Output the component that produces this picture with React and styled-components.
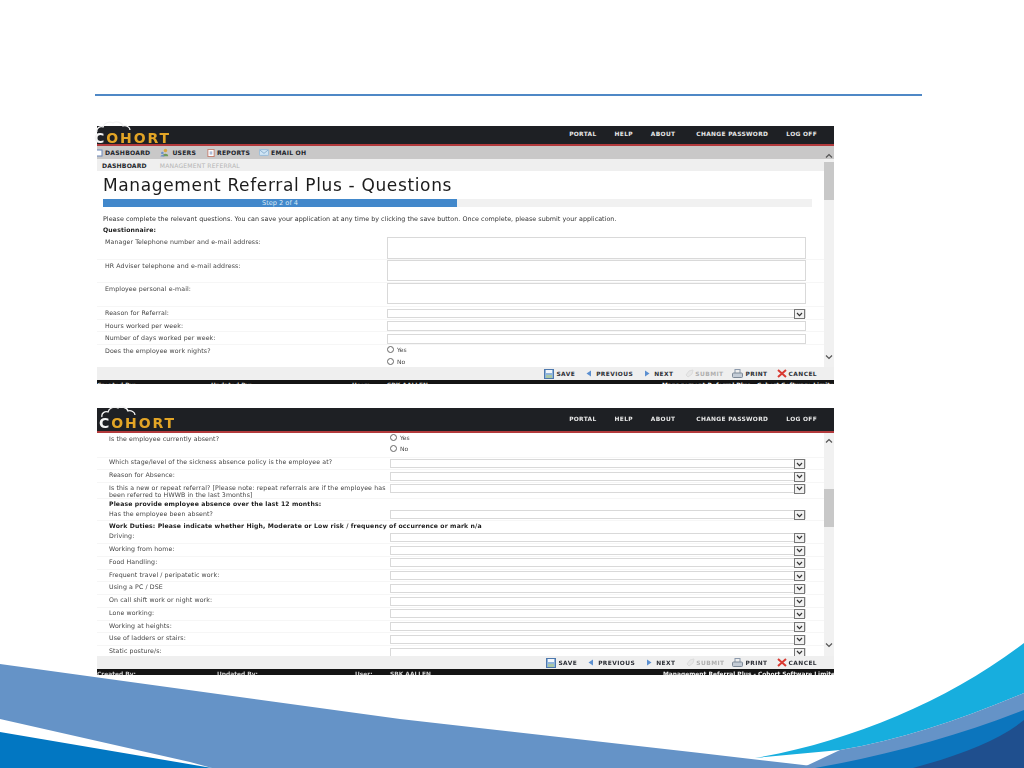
import React from "react";
import styled, { createGlobalStyle } from "styled-components";

const Global = createGlobalStyle`
  html, body { margin: 0; padding: 0; background: #fff; }
  body { font-family: "DejaVu Sans", "Liberation Sans", sans-serif; }
`;

const Slide = styled.div`
  position: relative;
  width: 1024px;
  height: 768px;
  overflow: hidden;
  background: #fff;
  padding-top: 94px;
  box-sizing: border-box;
`;
const Rule = styled.div`
  height: 2px;
  width: 827px;
  margin-left: 95px;
  background: #4f88c6;
`;
const Panel = styled.section`
  width: 737px;
  margin: ${p => p.$top}px 0 0 97px;
  filter: blur(0.35px);
  background: #fff;
  position: relative;
`;
const Header = styled.header`
  height: ${p => p.$h}px;
  box-sizing: border-box;
  background: #1e2024;
  border-bottom: 2px solid #b23a3c;
  display: flex;
  align-items: center;
  justify-content: space-between;
  padding-right: 17px;
`;
const Logo = styled.div`
  position: relative;
  display: flex;
  align-items: baseline;
  margin-left: ${p => p.$left}px;
  padding-top: ${p => p.$pad}px;
  font: bold 14px "DejaVu Sans", sans-serif;
  letter-spacing: 1.9px;
  line-height: 14px;
`;
const LogoC = styled.span`
  color: #f4f4f4;
  letter-spacing: 2px;
`;
const LogoRest = styled.span`
  color: #e3a526;
`;
const Cloud = styled.svg`
  position: absolute;
  left: 2px;
  top: ${p => p.$top}px;
`;
const TopLinks = styled.nav`
  display: flex;
  align-items: center;
  padding-bottom: 2px;
`;
const TopLink = styled.a`
  font: bold 5.9px "DejaVu Sans", sans-serif;
  letter-spacing: 0.32px;
  color: #e8e8e8;
  margin-left: ${p => p.$gap}px;
`;
const NavBar = styled.div`
  height: 13px;
  background: #c9c8c8;
  display: flex;
  align-items: center;
`;
const NavItem = styled.span`
  display: flex;
  align-items: center;
  font: bold 6.1px "DejaVu Sans", sans-serif;
  letter-spacing: 0.22px;
  color: #22252c;
  gap: 2px;
  margin-right: ${p => p.$gap}px;
`;
const Body = styled.div`
  display: flex;
  height: ${p => p.$h}px;
`;
const Content = styled.div`
  flex: 1;
  min-width: 0;
  overflow: hidden;
`;
const Crumbs = styled.div`
  height: 12px;
  background: #efefef;
  display: flex;
  align-items: center;
  padding-left: 5px;
  gap: 13px;
  font: bold 6.1px "DejaVu Sans", sans-serif;
  letter-spacing: 0.15px;
  color: #25272c;
`;
const CrumbMuted = styled.span`
  font-weight: normal;
  color: #b5b5b5;
`;
const Title = styled.h1`
  margin: 0;
  height: 28px;
  font: normal 17px/28px "DejaVu Sans", sans-serif;
  letter-spacing: 0.64px;
  color: #1c1c1c;
  padding-left: 6px;
  filter: grayscale(1);
`;
const Progress = styled.div`
  margin-left: 6px;
  width: 709px;
  height: 8px;
  background: #f1f1f1;
`;
const ProgressFill = styled.div`
  width: 354px;
  height: 100%;
  background: #4288cb;
  color: #dbe8f5;
  font: 6.6px/8px "DejaVu Sans", sans-serif;
  text-align: center;
`;
const Intro = styled.p`
  margin: 8px 0 0 6px;
  font: 6.4px/8px "DejaVu Sans", sans-serif;
  letter-spacing: 0.02px;
  color: #333;
  white-space: nowrap;
  filter: grayscale(1);
`;
const Section = styled.div`
  margin: ${p => p.$top || 0}px 0 0 ${p => p.$left}px;
  font: bold 6.13px/${p => p.$h || 8}px "DejaVu Sans", sans-serif;
  letter-spacing: 0.14px;
  color: #1a1a1a;
  height: ${p => p.$h || 8}px;
  white-space: nowrap;
  filter: grayscale(1);
`;
const Row = styled.div`
  display: grid;
  grid-template-columns: ${p => p.$label}px ${p => p.$field}px;
  height: ${p => p.$h}px;
  padding-left: ${p => p.$left}px;
  box-sizing: border-box;
  border-bottom: 1px solid #f6f6f6;
  align-items: start;
`;
const Label = styled.div`
  font: 6.25px/7.2px "DejaVu Sans", sans-serif;
  letter-spacing: 0.1px;
  color: #444;
  padding-top: ${p => p.$pad}px;
  filter: grayscale(1);
`;
const FieldBox = styled.div`
  position: relative;
  box-sizing: border-box;
  height: ${p => p.$h}px;
  margin-top: ${p => p.$top}px;
  border: 1px solid #d9d9d9;
  background: #fff;
`;
const SelectArrow = styled.span`
  position: absolute;
  right: 0;
  top: -1px;
  width: 11px;
  height: 10px;
  box-sizing: border-box;
  border: 1px solid #777;
  background: #f1f1f1;
  display: flex;
  align-items: center;
  justify-content: center;
`;
const RadioStack = styled.div`
  display: flex;
  flex-direction: column;
  gap: 3px;
  padding-top: ${p => p.$top}px;
`;
const RadioLine = styled.label`
  display: flex;
  align-items: center;
  gap: 3px;
  height: 8.5px;
  font: 6px "DejaVu Sans", sans-serif;
  color: #444;
  filter: grayscale(1);
`;
const RadioDot = styled.span`
  width: 7px;
  height: 7px;
  border: 1px solid #666;
  border-radius: 50%;
  background: #fff;
  box-sizing: border-box;
`;
const Scrollbar = styled.div`
  width: 10px;
  flex: none;
  position: relative;
  background: #f1f1f1;
`;
const Thumb = styled.div`
  position: absolute;
  left: 0;
  right: 0;
  top: ${p => p.$top}px;
  height: ${p => p.$h}px;
  background: #c8c8c8;
`;
const ScrollArrow = styled.svg`
  position: absolute;
  left: 1px;
  top: ${p => p.$top}px;
`;
const Toolbar = styled.div`
  height: 13px;
  background: #efefef;
  display: flex;
  align-items: center;
  justify-content: flex-end;
  padding-right: 17px;
`;
const Action = styled.span`
  display: flex;
  align-items: center;
  gap: ${p => p.$inner}px;
  margin-left: ${p => p.$gap}px;
  font: bold 5.9px "DejaVu Sans", sans-serif;
  letter-spacing: 0.42px;
  color: ${p => (p.$off ? "#aeaeae" : "#2b2e35")};
`;
const Footer = styled.footer`
  height: ${p => p.$h}px;
  background: #141414;
  overflow: hidden;
  display: grid;
  grid-template-columns: ${p => p.$cols};
  padding-top: ${p => p.$pad}px;
  box-sizing: border-box;
  font: bold 5.9px/7px "DejaVu Sans", sans-serif;
  color: #d5d5d5;
  white-space: nowrap;
`;
const FooterRight = styled.span`
  text-align: right;
  color: #f2f2f2;
`;
const Decoration = styled.svg`
  position: absolute;
  left: 0;
  top: 0;
  pointer-events: none;
`;

const ScrollChevron = ({ up, top }) => (
  <ScrollArrow width="8" height="6" viewBox="0 0 8 6" $top={top}>
    <path d={up ? "M1 4.5 4 1.5 7 4.5" : "M1 1.5 4 4.5 7 1.5"} fill="none" stroke="#555" strokeWidth="1.2" />
  </ScrollArrow>
);

const SmallChevron = () => (
  <svg width="7" height="5" viewBox="0 0 7 5">
    <path d="M1 1 3.5 3.6 6 1" fill="none" stroke="#333" strokeWidth="1.2" />
  </svg>
);

const CloudLogo = ({ top }) => (
  <Cloud $top={top} width="36" height="12" viewBox="0 0 36 12">
    <path d="M1 11C0 7 4 5 7 6 8 2 13 0 17 2 20 0 26 1 27 5 30 4 34 6 34 9" fill="none" stroke="#f3f3f3" strokeWidth="1.3" />
  </Cloud>
);

const IconBoard = () => (
  <svg width="6" height="8" viewBox="0 0 6 8"><rect x="-1" y="1" width="6" height="6" fill="#fff" stroke="#6b86b8" /></svg>
);
const IconUsers = () => (
  <svg width="10" height="9" viewBox="0 0 11 9">
    <circle cx="6" cy="2.4" r="1.9" fill="#d9a53d" />
    <path d="M3 8.5C3 5 9 5 9 8.5Z" fill="#6f9a5a" />
    <circle cx="2.6" cy="5" r="1.4" fill="#6c91c8" />
    <path d="M0.5 9C0.5 6.6 5 6.6 5 9Z" fill="#6c91c8" />
  </svg>
);
const IconReport = () => (
  <svg width="8" height="10" viewBox="0 0 9 10">
    <rect x="1" y="1" width="7" height="8" fill="#fff" stroke="#c07a6a" />
    <path d="M3 4H6M3 6H6" stroke="#6b86b8" />
  </svg>
);
const IconMail = () => (
  <svg width="10" height="7" viewBox="0 0 12 8">
    <rect x="0.5" y="0.5" width="11" height="7" rx="1" fill="#cfe4f4" stroke="#8fb7d8" />
    <path d="M1 1 6 5 11 1" fill="none" stroke="#7ea6c9" />
  </svg>
);
const IconSave = () => (
  <svg width="10" height="10" viewBox="0 0 10 10">
    <rect x="0.5" y="0.5" width="9" height="9" fill="#8fb4dc" stroke="#4d78ad" />
    <rect x="2" y="1" width="6" height="3" fill="#f2f6fb" />
    <rect x="2" y="6" width="6" height="3" fill="#a9c7a6" />
  </svg>
);
const IconPrev = () => (
  <svg width="6" height="7" viewBox="0 0 6 7"><path d="M5 0.5V6.5L0.5 3.5Z" fill="#5b8fd0" /></svg>
);
const IconNext = () => (
  <svg width="6" height="7" viewBox="0 0 6 7"><path d="M1 0.5V6.5L5.5 3.5Z" fill="#5b8fd0" /></svg>
);
const IconSubmit = () => (
  <svg width="9" height="9" viewBox="0 0 9 9"><path d="M1 6 4 2 8 1 7 5 3 8Z" fill="#e8e8e8" stroke="#dcdcdc" /></svg>
);
const IconPrint = () => (
  <svg width="11" height="10" viewBox="0 0 11 10">
    <rect x="3" y="0.5" width="5" height="4" fill="#eee" stroke="#8a98aa" />
    <rect x="0.5" y="4" width="10" height="4.5" rx="1" fill="#c4ccd6" stroke="#7d8997" />
  </svg>
);
const IconCancel = () => (
  <svg width="10" height="9" viewBox="0 0 10 9"><path d="M1 1 9 8M9 1 1 8" stroke="#d93a32" strokeWidth="2" /></svg>
);

const topLinks = [
  ["PORTAL", 0], ["HELP", 18], ["ABOUT", 18], ["CHANGE PASSWORD", 21], ["LOG OFF", 18],
];

const HeaderBar = ({ h, left, pad, cloudTop }) => (
  <Header $h={h}>
    <Logo $left={left} $pad={pad}>
      <CloudLogo top={cloudTop} />
      <LogoC>C</LogoC>
      <LogoRest>OHORT</LogoRest>
    </Logo>
    <TopLinks>
      {topLinks.map(([t, g]) => <TopLink key={t} $gap={g}>{t}</TopLink>)}
    </TopLinks>
  </Header>
);

const ActionBar = ({ gaps }) => (
  <Toolbar>
    <Action $gap={0} $inner={2}><IconSave />SAVE</Action>
    <Action $gap={gaps[0]} $inner={4}><IconPrev />PREVIOUS</Action>
    <Action $gap={gaps[1]} $inner={4}><IconNext />NEXT</Action>
    <Action $gap={gaps[2]} $inner={1} $off><IconSubmit />SUBMIT</Action>
    <Action $gap={gaps[3]} $inner={2}><IconPrint />PRINT</Action>
    <Action $gap={gaps[4]} $inner={2}><IconCancel />CANCEL</Action>
  </Toolbar>
);

const Question = ({ g, label, h, field, boxH, boxTop, pad = 2, arrow }) => (
  <Row $left={g.left} $label={g.label} $field={g.field} $h={h}>
    <Label $pad={pad}>{label}</Label>
    {field || (
      <FieldBox $h={boxH} $top={boxTop}>
        {arrow && <SelectArrow><SmallChevron /></SelectArrow>}
      </FieldBox>
    )}
  </Row>
);

const Radios = ({ top }) => (
  <RadioStack $top={top}>
    <RadioLine><RadioDot />Yes</RadioLine>
    <RadioLine><RadioDot />No</RadioLine>
  </RadioStack>
);

const g1 = { left: 8, label: 282, field: 419 };
const g2 = { left: 12, label: 281, field: 416 };

const duties = [
  "Driving:", "Working from home:", "Food Handling:", "Frequent travel / peripatetic work:",
  "Using a PC / DSE", "On call shift work or night work:", "Lone working:",
  "Working at heights:", "Use of ladders or stairs:", "Static posture/s:",
];

export default function App() {
  return (
    <Slide>
      <Global />
      <Decoration width="1024" height="768" viewBox="0 0 1024 768">
        <path d="M0 664 L400 719 L700 753 L812 766 L820 768 L212 768 L190 762 L0 719Z" fill="#6593c7" />
        <path d="M0 732 L212 768 L0 768Z" fill="#0277c2" />
        <path d="M755 758 C850 742 950 700 1024 643 L1024 693 C960 720 900 740 840 750Z" fill="#17aede" />
        <path d="M806 766 L840 750 C900 740 960 720 1024 693 L1024 720 L1024 768 L812 768Z" fill="#6593c7" />
        <path d="M815 768 C890 755 960 735 1024 710 L1024 768Z" fill="#0c75bd" />
        <path d="M913 768 C960 755 1000 740 1024 720 L1024 768Z" fill="#1f4f8e" />
      </Decoration>
      <Rule />
      <Panel $top={30}>
        <HeaderBar h={20} left={-3} pad={5} cloudTop={-5} />
        <NavBar>
          <NavItem $gap={10}><IconBoard />DASHBOARD</NavItem>
          <NavItem $gap={11}><IconUsers />USERS</NavItem>
          <NavItem $gap={9}><IconReport />REPORTS</NavItem>
          <NavItem $gap={0}><IconMail />EMAIL OH</NavItem>
        </NavBar>
        <Body $h={208}>
          <Content>
            <Crumbs>DASHBOARD<CrumbMuted>MANAGEMENT REFERRAL</CrumbMuted></Crumbs>
            <Title>Management Referral Plus - Questions</Title>
            <Progress><ProgressFill>Step 2 of 4</ProgressFill></Progress>
            <Intro>Please complete the relevant questions. You can save your application at any time by clicking the save button. Once complete, please submit your application.</Intro>
            <Section $left={6} $top={3}>Questionnaire:</Section>
            <Question g={g1} label="Manager Telephone number and e-mail address:" h={26} boxH={22} boxTop={3} pad={4} />
            <Question g={g1} label="HR Adviser telephone and e-mail address:" h={23} boxH={21} boxTop={0} />
            <Question g={g1} label="Employee personal e-mail:" h={24} boxH={21} boxTop={0} />
            <Question g={g1} label="Reason for Referral:" h={12.6} boxH={9} boxTop={2} arrow />
            <Question g={g1} label="Hours worked per week:" h={12.6} boxH={10} boxTop={1.5} />
            <Question g={g1} label="Number of days worked per week:" h={12.6} boxH={10} boxTop={1.5} />
            <Question g={g1} label="Does the employee work nights?" h={24} field={<Radios top={0.5} />} />
          </Content>
          <Scrollbar>
            <ScrollChevron up top={-6} />
            <Thumb $top={3} $h={38} />
            <ScrollChevron top={195} />
          </Scrollbar>
        </Body>
        <ActionBar gaps={[11, 11, 12, 9, 9]} />
        <Footer $h={4} $pad={2} $cols="114px 141px 35px 275px 1fr">
          <span>Created By:</span>
          <span>Updated By:</span>
          <span>User:</span>
          <span>SBK AALLEN</span>
          <FooterRight>Management Referral Plus - Cohort Software Limited</FooterRight>
        </Footer>
      </Panel>
      <Panel $top={24}>
        <HeaderBar h={25} left={2} pad={7} cloudTop={-3} />
        <Body $h={223}>
          <Content>
            <Question g={g2} label="Is the employee currently absent?" h={24.5} pad={2} field={<Radios top={0} />} />
            <Question g={g2} label="Which stage/level of the sickness absence policy is the employee at?" h={12.8} boxH={9} boxTop={1.5} pad={0.5} arrow />
            <Question g={g2} label="Reason for Absence:" h={12.5} boxH={9} boxTop={1.5} pad={1} arrow />
            <Question g={g2} label="Is this a new or repeat referral? [Please note: repeat referrals are if the employee has been referred to HWWB in the last 3months]" h={16} boxH={9} boxTop={1} pad={1} arrow />
            <Section $left={12} $h={9.5}>Please provide employee absence over the last 12 months:</Section>
            <Question g={g2} label="Has the employee been absent?" h={12.5} boxH={9} boxTop={2} arrow />
            <Section $left={12} $h={10.5}>Work Duties: Please indicate whether High, Moderate or Low risk / frequency of occurrence or mark n/a</Section>
            {duties.map(d => (
              <Question key={d} g={g2} label={d} h={12.75} boxH={9} boxTop={1.5} pad={1} arrow />
            ))}
          </Content>
          <Scrollbar>
            <ScrollChevron up top={5} />
            <Thumb $top={56} $h={38} />
            <ScrollChevron top={209} />
          </Scrollbar>
        </Body>
        <ActionBar gaps={[11, 11, 11, 8, 9]} />
        <Footer $h={6} $pad={1.5} $cols="120px 138px 35px 273px 1fr">
          <span>Created By:</span>
          <span>Updated By:</span>
          <span>User:</span>
          <span>SBK AALLEN</span>
          <FooterRight>Management Referral Plus - Cohort Software Limited</FooterRight>
        </Footer>
      </Panel>
    </Slide>
  );
}
